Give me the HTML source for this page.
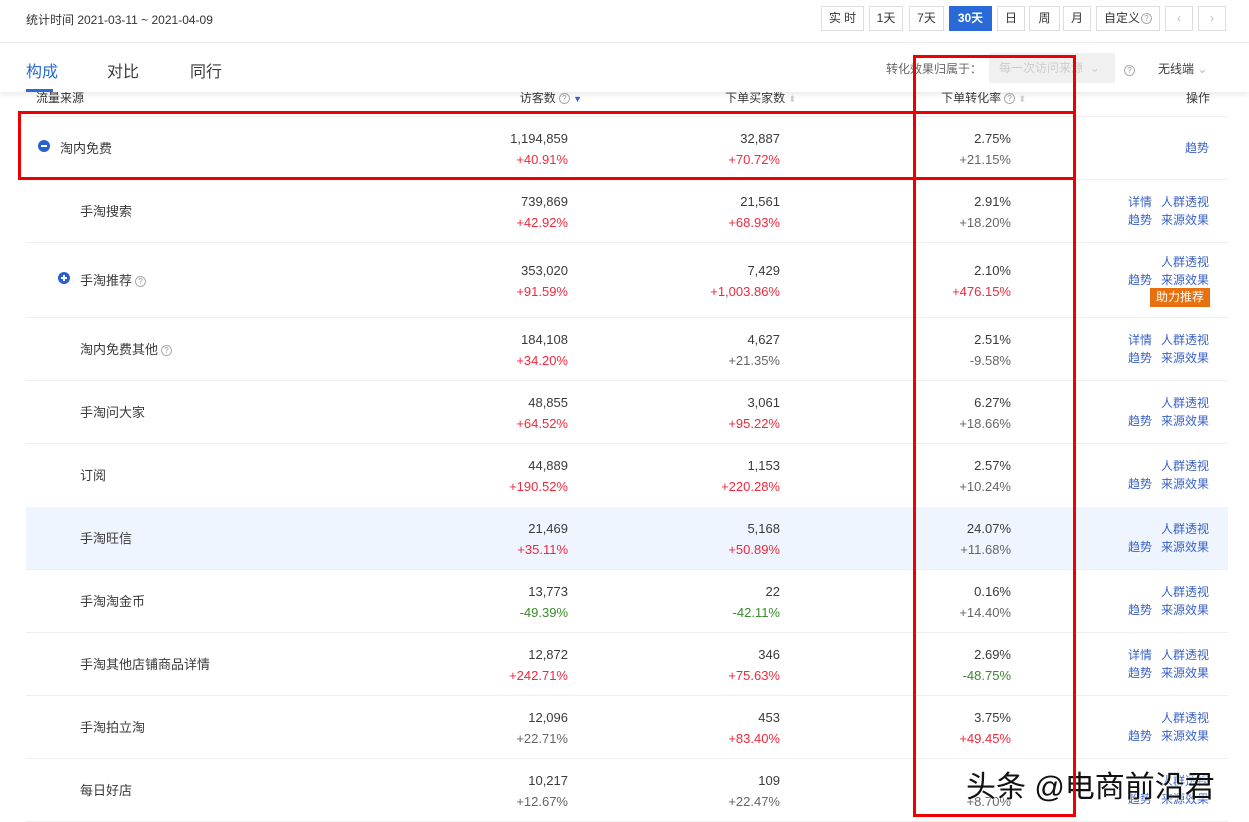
<!DOCTYPE html>
<html><head><meta charset="utf-8">
<style>
*{margin:0;padding:0;box-sizing:border-box}
body{width:1249px;height:822px;overflow:hidden;background:#fff;position:relative;font-family:"Liberation Sans","Noto Sans CJK SC",sans-serif;font-size:13px;color:#3a3a3a}
.a{position:absolute;white-space:nowrap}
.btn{position:absolute;top:6px;height:25px;border:1px solid #ddd;background:#fff;font-size:12px;line-height:23px;text-align:center;color:#333}
.r{text-align:right;margin-top:2px}
.h{margin-top:0}
.red{color:#f0283c}.grn{color:#3a8a2a}.gry{color:#666}
.lk{color:#3a62c8;font-size:12px}
.q{display:inline-block;width:11px;height:11px;border:1px solid #aaa;border-radius:50%;font-size:8px;line-height:9px;text-align:center;color:#999;vertical-align:1px;margin-left:3px}
.line{position:absolute;left:26px;width:1202px;height:1px;background:#eee}
</style></head><body>
<div class="a" style="left:26px;top:11px;font-size:12px;color:#333">统计时间 2021-03-11 ~ 2021-04-09</div>
<div class="btn" style="left:821px;width:43px">实 时</div>
<div class="btn" style="left:869px;width:34px">1天</div>
<div class="btn" style="left:909px;width:35px">7天</div>
<div class="btn" style="left:949px;width:43px;background:#2a6ad8;border-color:#2a6ad8;color:#fff;font-weight:bold">30天</div>
<div class="btn" style="left:997px;width:28px">日</div>
<div class="btn" style="left:1029px;width:31px">周</div>
<div class="btn" style="left:1063px;width:28px">月</div>
<div class="btn" style="left:1096px;width:64px">自定义<span class="q" style="margin-left:1px">?</span></div>
<div class="btn" style="left:1165px;width:28px;color:#bbb">‹</div>
<div class="btn" style="left:1198px;width:28px;color:#bbb">›</div>
<div class="a" style="left:0;top:42px;width:1249px;height:1px;background:#eee"></div>
<div class="a" style="left:0;top:43px;width:1249px;height:49px;background:#fff;box-shadow:0 3px 5px rgba(0,0,0,0.08);z-index:2">
<div class="a" style="left:26px;top:15px;font-size:16px;color:#2a6ad8">构成</div>
<div class="a" style="left:26px;top:46px;width:27px;height:3px;background:#2a6ad8"></div>
<div class="a" style="left:107px;top:15px;font-size:16px">对比</div>
<div class="a" style="left:190px;top:15px;font-size:16px">同行</div>
<div class="a" style="left:886px;top:17px;font-size:12px;color:#666">转化效果归属于：</div>
<div class="a" style="left:989px;top:10px;width:126px;height:30px;background:#f0f0f0;color:#ccc;font-size:12px;line-height:30px;padding-left:10px">每一次访问来源 &nbsp;⌄</div>
<div class="a" style="left:1121px;top:19px"><span class="q">?</span></div>
<div class="a" style="left:1158px;top:17px;font-size:12px">无线端 <span style="color:#bbb">⌄</span></div>
</div>
<div class="a" style="left:36px;top:89px;font-size:12px;color:#333">流量来源</div>
<div class="a r h" style="left:480px;width:102px;top:89px;font-size:12px">访客数<span class="q">?</span> <span style="color:#3a62c8;font-size:9px">▼</span></div>
<div class="a r h" style="left:680px;width:116px;top:89px;font-size:12px">下单买家数 <span style="color:#ccc;font-size:9px">⬍</span></div>
<div class="a r h" style="left:900px;width:126px;top:89px;font-size:12px">下单转化率<span class="q">?</span> <span style="color:#ccc;font-size:9px">⬍</span></div>
<div class="a" style="left:1186px;top:89px;font-size:12px">操作</div>
<div class="line" style="top:116px"></div>
<div class="a" style="left:26px;top:507px;width:1202px;height:62px;background:#eef5ff"></div>

<div class="a" style="left:38px;top:140px;width:12px;height:12px;border-radius:50%;background:#2a5fd0"><div style="position:absolute;left:3px;top:5px;width:6px;height:2px;background:#fff"></div></div>
<div class="a" style="left:60px;top:138px">淘内免费</div>
<div class="a r" style="left:468px;width:100px;top:129px">1,194,859</div><div class="a r red" style="left:468px;width:100px;top:150px">+40.91%</div>
<div class="a r" style="left:680px;width:100px;top:129px">32,887</div><div class="a r red" style="left:680px;width:100px;top:150px">+70.72%</div>
<div class="a r" style="left:911px;width:100px;top:129px">2.75%</div><div class="a r gry" style="left:911px;width:100px;top:150px">+21.15%</div>
<div class="a lk" style="left:1185px;top:139px">趋势</div>
<div class="line" style="top:179px"></div>

<div class="a" style="left:80px;top:201px">手淘搜索</div>
<div class="a r" style="left:468px;width:100px;top:192px">739,869</div><div class="a r red" style="left:468px;width:100px;top:213px">+42.92%</div>
<div class="a r" style="left:680px;width:100px;top:192px">21,561</div><div class="a r red" style="left:680px;width:100px;top:213px">+68.93%</div>
<div class="a r" style="left:911px;width:100px;top:192px">2.91%</div><div class="a r gry" style="left:911px;width:100px;top:213px">+18.20%</div>
<div class="a lk" style="left:1128px;top:193px">详情</div><div class="a lk" style="left:1161px;top:193px">人群透视</div>
<div class="a lk" style="left:1128px;top:211px">趋势</div><div class="a lk" style="left:1161px;top:211px">来源效果</div>
<div class="line" style="top:242px"></div>

<div class="a" style="left:58px;top:272px;width:12px;height:12px;border-radius:50%;background:#2a5fd0"><div style="position:absolute;left:3px;top:5px;width:6px;height:2px;background:#fff"></div><div style="position:absolute;left:5px;top:3px;width:2px;height:6px;background:#fff"></div></div>
<div class="a" style="left:80px;top:270px">手淘推荐<span class="q">?</span></div>
<div class="a r" style="left:468px;width:100px;top:261px">353,020</div><div class="a r red" style="left:468px;width:100px;top:282px">+91.59%</div>
<div class="a r" style="left:680px;width:100px;top:261px">7,429</div><div class="a r red" style="left:680px;width:100px;top:282px">+1,003.86%</div>
<div class="a r" style="left:911px;width:100px;top:261px">2.10%</div><div class="a r red" style="left:911px;width:100px;top:282px">+476.15%</div>
<div class="a lk" style="left:1161px;top:253px">人群透视</div>
<div class="a lk" style="left:1128px;top:271px">趋势</div><div class="a lk" style="left:1161px;top:271px">来源效果</div>
<div class="a" style="left:1150px;top:288px;width:60px;height:19px;background:#e8700e;color:#fff;font-size:12px;line-height:19px;text-align:center">助力推荐</div>
<div class="line" style="top:317px"></div>

<div class="a" style="left:80px;top:339px">淘内免费其他<span class="q">?</span></div>
<div class="a r" style="left:468px;width:100px;top:330px">184,108</div><div class="a r red" style="left:468px;width:100px;top:351px">+34.20%</div>
<div class="a r" style="left:680px;width:100px;top:330px">4,627</div><div class="a r gry" style="left:680px;width:100px;top:351px">+21.35%</div>
<div class="a r" style="left:911px;width:100px;top:330px">2.51%</div><div class="a r gry" style="left:911px;width:100px;top:351px">-9.58%</div>
<div class="a lk" style="left:1128px;top:331px">详情</div><div class="a lk" style="left:1161px;top:331px">人群透视</div>
<div class="a lk" style="left:1128px;top:349px">趋势</div><div class="a lk" style="left:1161px;top:349px">来源效果</div>
<div class="line" style="top:380px"></div>

<div class="a" style="left:80px;top:402px">手淘问大家</div>
<div class="a r" style="left:468px;width:100px;top:393px">48,855</div><div class="a r red" style="left:468px;width:100px;top:414px">+64.52%</div>
<div class="a r" style="left:680px;width:100px;top:393px">3,061</div><div class="a r red" style="left:680px;width:100px;top:414px">+95.22%</div>
<div class="a r" style="left:911px;width:100px;top:393px">6.27%</div><div class="a r gry" style="left:911px;width:100px;top:414px">+18.66%</div>
<div class="a lk" style="left:1161px;top:394px">人群透视</div>
<div class="a lk" style="left:1128px;top:412px">趋势</div><div class="a lk" style="left:1161px;top:412px">来源效果</div>
<div class="line" style="top:443px"></div>

<div class="a" style="left:80px;top:465px">订阅</div>
<div class="a r" style="left:468px;width:100px;top:456px">44,889</div><div class="a r red" style="left:468px;width:100px;top:477px">+190.52%</div>
<div class="a r" style="left:680px;width:100px;top:456px">1,153</div><div class="a r red" style="left:680px;width:100px;top:477px">+220.28%</div>
<div class="a r" style="left:911px;width:100px;top:456px">2.57%</div><div class="a r gry" style="left:911px;width:100px;top:477px">+10.24%</div>
<div class="a lk" style="left:1161px;top:457px">人群透视</div>
<div class="a lk" style="left:1128px;top:475px">趋势</div><div class="a lk" style="left:1161px;top:475px">来源效果</div>

<div class="a" style="left:80px;top:528px">手淘旺信</div>
<div class="a r" style="left:468px;width:100px;top:519px">21,469</div><div class="a r red" style="left:468px;width:100px;top:540px">+35.11%</div>
<div class="a r" style="left:680px;width:100px;top:519px">5,168</div><div class="a r red" style="left:680px;width:100px;top:540px">+50.89%</div>
<div class="a r" style="left:911px;width:100px;top:519px">24.07%</div><div class="a r gry" style="left:911px;width:100px;top:540px">+11.68%</div>
<div class="a lk" style="left:1161px;top:520px">人群透视</div>
<div class="a lk" style="left:1128px;top:538px">趋势</div><div class="a lk" style="left:1161px;top:538px">来源效果</div>
<div class="line" style="top:569px"></div>

<div class="a" style="left:80px;top:591px">手淘淘金币</div>
<div class="a r" style="left:468px;width:100px;top:582px">13,773</div><div class="a r grn" style="left:468px;width:100px;top:603px">-49.39%</div>
<div class="a r" style="left:680px;width:100px;top:582px">22</div><div class="a r grn" style="left:680px;width:100px;top:603px">-42.11%</div>
<div class="a r" style="left:911px;width:100px;top:582px">0.16%</div><div class="a r gry" style="left:911px;width:100px;top:603px">+14.40%</div>
<div class="a lk" style="left:1161px;top:583px">人群透视</div>
<div class="a lk" style="left:1128px;top:601px">趋势</div><div class="a lk" style="left:1161px;top:601px">来源效果</div>
<div class="line" style="top:632px"></div>

<div class="a" style="left:80px;top:654px">手淘其他店铺商品详情</div>
<div class="a r" style="left:468px;width:100px;top:645px">12,872</div><div class="a r red" style="left:468px;width:100px;top:666px">+242.71%</div>
<div class="a r" style="left:680px;width:100px;top:645px">346</div><div class="a r red" style="left:680px;width:100px;top:666px">+75.63%</div>
<div class="a r" style="left:911px;width:100px;top:645px">2.69%</div><div class="a r grn" style="left:911px;width:100px;top:666px">-48.75%</div>
<div class="a lk" style="left:1128px;top:646px">详情</div><div class="a lk" style="left:1161px;top:646px">人群透视</div>
<div class="a lk" style="left:1128px;top:664px">趋势</div><div class="a lk" style="left:1161px;top:664px">来源效果</div>
<div class="line" style="top:695px"></div>

<div class="a" style="left:80px;top:717px">手淘拍立淘</div>
<div class="a r" style="left:468px;width:100px;top:708px">12,096</div><div class="a r gry" style="left:468px;width:100px;top:729px">+22.71%</div>
<div class="a r" style="left:680px;width:100px;top:708px">453</div><div class="a r red" style="left:680px;width:100px;top:729px">+83.40%</div>
<div class="a r" style="left:911px;width:100px;top:708px">3.75%</div><div class="a r red" style="left:911px;width:100px;top:729px">+49.45%</div>
<div class="a lk" style="left:1161px;top:709px">人群透视</div>
<div class="a lk" style="left:1128px;top:727px">趋势</div><div class="a lk" style="left:1161px;top:727px">来源效果</div>
<div class="line" style="top:758px"></div>

<div class="a" style="left:80px;top:780px">每日好店</div>
<div class="a r" style="left:468px;width:100px;top:771px">10,217</div><div class="a r gry" style="left:468px;width:100px;top:792px">+12.67%</div>
<div class="a r" style="left:680px;width:100px;top:771px">109</div><div class="a r gry" style="left:680px;width:100px;top:792px">+22.47%</div>
<div class="a r gry" style="left:911px;width:100px;top:792px">+8.70%</div>
<div class="a lk" style="left:1161px;top:772px">人群透视</div>
<div class="a lk" style="left:1128px;top:790px">趋势</div><div class="a lk" style="left:1161px;top:790px">来源效果</div>
<div class="line" style="top:821px"></div>

<div class="a" style="left:966px;top:762px;font-size:30px;color:#111;z-index:4;text-shadow:0 0 2px #fff,0 0 2px #fff">头条 @电商前沿君</div>

<div class="a" style="left:18px;top:111px;width:1058px;height:69px;border:3px solid #e00;z-index:5"></div>
<div class="a" style="left:913px;top:55px;width:163px;height:762px;border:3px solid #e00;z-index:5"></div>
</body></html>
